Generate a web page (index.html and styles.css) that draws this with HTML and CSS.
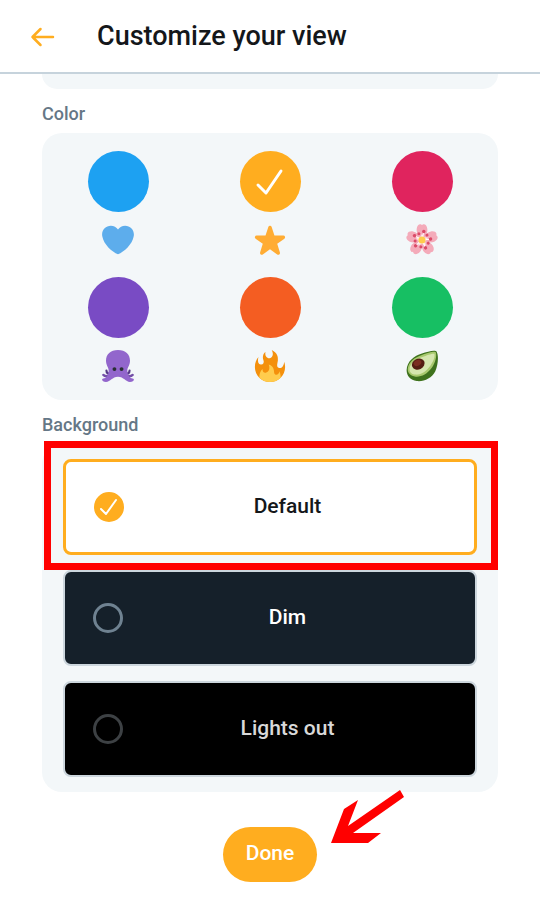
FILE: index.html
```html
<!DOCTYPE html>
<html lang="en">
<head>
<meta charset="utf-8">
<meta name="viewport" content="width=device-width, initial-scale=1">
<title>Customize your view</title>
<link rel="stylesheet" href="styles.css">
</head>
<body>
<header class="header">
  <button class="back" type="button" aria-label="Back">
    <svg viewBox="0 0 24 20" width="24" height="20"><path d="M22 11H1.500M9.500 3L1.500 11l8 8"/></svg>
  </button>
  <h1 class="title">Customize your view</h1>
</header>
<main class="content">
  <div class="panel panel-end"></div>

  <h2 class="section-title" id="color-title">Color</h2>
  <div class="panel colors" role="radiogroup" aria-labelledby="color-title">
    <label class="color">
      <input class="swatch blue" type="radio" name="color" aria-label="Blue">
      <svg class="emoji" viewBox="0 0 36 36"><path fill="#5DADEC" d="M35.885 11.833c0-5.450-4.418-9.868-9.867-9.868-3.308 0-6.227 1.633-8.018 4.129-1.791-2.496-4.710-4.129-8.017-4.129-5.450 0-9.868 4.417-9.868 9.868 0 .772.098 1.520.266 2.241C1.751 22.587 11.216 31.568 18 34.034c6.783-2.466 16.249-11.447 17.617-19.959.170-.721.268-1.469.268-2.242z"/></svg>
    </label>
    <label class="color">
      <input class="swatch yellow" type="radio" name="color" aria-label="Yellow" checked>
      <svg class="swatch-check" viewBox="0 0 61 61"><path d="M18 34l8 8 15-22"/></svg>
      <svg class="emoji" viewBox="0 0 36 36"><path fill="#FFAC33" d="M27.287 34.627c-.404 0-.806-.124-1.152-.371L18 28.422l-8.135 5.834a1.970 1.970 0 0 1-2.312-.008 1.971 1.971 0 0 1-.721-2.194l3.034-9.792-8.062-5.681a1.980 1.980 0 0 1-.708-2.203 1.978 1.978 0 0 1 1.866-1.363L12.947 13l3.179-9.549a1.976 1.976 0 0 1 3.749 0L23 13l10.036.015a1.975 1.975 0 0 1 1.159 3.566l-8.062 5.681 3.034 9.792a1.970 1.970 0 0 1-.720 2.194 1.957 1.957 0 0 1-1.160.379z"/></svg>
    </label>
    <label class="color">
      <input class="swatch pink" type="radio" name="color" aria-label="Pink">
      <svg class="emoji" viewBox="0 0 36 36">
        <defs>
          <g id="petal">
            <path fill="#F4ABBA" d="M18 18C14.500 14.500 11.500 10 12 5.500 12.300 2.500 14 .3 16 .3c1 0 1.300.7 2 .7s1-.7 2-.7c2 0 3.700 2.200 4 5.200.5 4.500-2.500 9-6 12.500z"/>
          </g>
          <g id="stamen">
            <path stroke="#fff" stroke-width="1.200" stroke-linecap="round" d="M18 18l2-9"/>
            <circle cx="20" cy="8.500" r="1.900" fill="#DB4B68"/>
            <circle cx="14.500" cy="11" r="1.700" fill="#DB4B68"/>
          </g>
        </defs>
        <use href="#petal"/><use href="#petal" transform="rotate(72 18 18)"/><use href="#petal" transform="rotate(144 18 18)"/><use href="#petal" transform="rotate(216 18 18)"/><use href="#petal" transform="rotate(288 18 18)"/>
        <path fill="#FCE7EB" d="M18 11l2 4 5 .5-3.500 4 .8 5L18 22l-4.300 2.500.8-5-3.500-4 5-.5z"/>
        <use href="#stamen"/><use href="#stamen" transform="rotate(72 18 18)"/><use href="#stamen" transform="rotate(144 18 18)"/><use href="#stamen" transform="rotate(216 18 18)"/><use href="#stamen" transform="rotate(288 18 18)"/>
        <circle cx="18" cy="18" r="4" fill="#FFCC4D"/>
      </svg>
    </label>
    <label class="color">
      <input class="swatch purple" type="radio" name="color" aria-label="Purple">
      <svg class="emoji" viewBox="0 0 36 36">
        <g fill="none" stroke="#553986" stroke-linecap="round" stroke-width="2.400"><path d="M5 23c0 3 2 4 5 4M31 23c0 3-2 4-5 4"/></g>
        <g fill="none" stroke="#7450A8" stroke-linecap="round" stroke-width="2.500"><path d="M1.500 28c2 2 5 1.500 8-1M34.500 28c-2 2-5 1.500-8-1"/></g>
        <path fill="#9266CC" d="M18 0C9.500 0 4.500 5 4.500 12c0 5 3 7.500 3 11 0 4-1 6-4 8.500-1 .8-3 .2-3.300 1.500-.4 1.500 1.300 3 4.300 3 5 0 7-5.800 13.500-5.800S26.500 36 31.500 36c3 0 4.700-1.500 4.300-3-.3-1.300-2.300-.7-3.300-1.500C29.500 29 28.500 27 28.500 23c0-3.500 3-6 3-11C31.500 5 26.500 0 18 0z"/>
        <circle cx="14" cy="21.500" r="2.200" fill="#292F33"/><circle cx="22" cy="21.500" r="2.200" fill="#292F33"/>
      </svg>
    </label>
    <label class="color">
      <input class="swatch orange" type="radio" name="color" aria-label="Orange">
      <svg class="emoji" viewBox="0 0 36 36"><path fill="#F4900C" d="M35 19c0-2.062-.367-4.039-1.040-5.868-.460 5.389-3.333 8.157-6.335 6.868-2.812-1.208-.917-5.917-.777-8.164.236-3.809-.012-8.169-6.931-11.794 2.875 5.500.333 8.917-2.333 9.125-2.958.231-5.667-2.542-4.667-7.042-3.238 2.386-3.332 6.402-2.333 9 1.042 2.708-.042 4.958-2.583 5.208-2.840.280-4.418-3.041-2.963-8.333C2.520 10.965 1 14.805 1 19c0 9.389 7.611 17 17 17s17-7.611 17-17z"/><path fill="#FFCC4D" d="M28.394 23.999c.148 3.084-2.561 4.293-4.019 3.709-2.106-.843-1.541-2.291-2.083-5.291s-2.625-5.083-5.708-6c2.250 6.333-1.247 8.667-3.080 9.084-1.872.426-3.753-.001-3.968-4.007C7.352 23.668 6 26.676 6 30c0 .368.023.730.055 1.090C9.125 34.124 13.342 36 18 36s8.875-1.876 11.945-4.910c.032-.360.055-.722.055-1.090 0-2.187-.584-4.236-1.606-6.001z"/></svg>
    </label>
    <label class="color">
      <input class="swatch green" type="radio" name="color" aria-label="Green">
      <svg class="emoji" viewBox="0 0 36 36">
        <path fill="#3E721D" d="M34.500 2C37 7 36 17 33 24 29 32 20 36 12 35 5 34 .5 29 .7 22.500 1 13 9 6.500 18 4c6-2 15-4.500 16.500-2z"/>
        <path fill="#A8C96E" d="M33.500 2.500c1.500 4-.5 12-4.500 17.500-5 7-12 10.500-18 10C5 29.500 1.800 26 2 21.500 2.300 13.500 10 8 18 5.500c6-2 14-4.500 15.500-3z"/>
        <path fill="#D5E6AE" d="M32 4.500c1 4-2 10-6 15-4.500 6-10 8.500-15 8.200-4.500-.3-7.200-2.700-7-6.700.3-6.500 7.500-11 14.500-13.200 5-1.600 12-4.300 13.500-3.300z"/>
        <ellipse cx="13.800" cy="15.800" rx="7.400" ry="6" transform="rotate(-25 13.800 15.800)" fill="#541D12"/>
        <ellipse cx="13" cy="14.500" rx="4.500" ry="3.200" transform="rotate(-25 13 14.500)" fill="#7A2C20"/>
      </svg>
    </label>
  </div>

  <h2 class="section-title" id="background-title">Background</h2>
  <div class="panel backgrounds" role="radiogroup" aria-labelledby="background-title">
    <div class="highlighted">
      <label class="option default">
        <input class="radio" type="radio" name="background" checked>
        <svg class="radio-check" viewBox="0 0 30 30"><path d="M7 17l5 5L22 8"/></svg>
        <span class="option-name">Default</span>
      </label>
      <div class="highlight"></div>
    </div>
    <label class="option dim">
      <input class="radio" type="radio" name="background">
      <span class="option-name">Dim</span>
    </label>
    <label class="option lights-out">
      <input class="radio" type="radio" name="background">
      <span class="option-name">Lights out</span>
    </label>
  </div>

  <div class="actions">
    <button class="done" type="button">Done</button>
    <svg class="pointer" viewBox="0 0 74 54" width="74" height="54"><path d="M0 53L13 19 27 10 17 36 69 0l4 7-51 36h28L37 53z"/></svg>
  </div>
</main>
</body>
</html>
```
FILE: styles.css
```css
* {
  box-sizing: border-box;
}

body {
  margin: 0;
  background: #fff;
  color: #14171a;
  font-family: Roboto, "Liberation Sans", sans-serif;
}

.header {
  display: flex;
  align-items: center;
  gap: 42px;
  height: 74px;
  padding: 0 31px;
  border-bottom: 2px solid #c6d3dc;
}

.back {
  display: flex;
  padding: 0;
  border: 0;
  background: none;
}

.back svg {
  overflow: visible;
  fill: none;
  stroke: #ffad1f;
  stroke-width: 2.500;
  stroke-linecap: round;
  stroke-linejoin: round;
}

.title {
  margin: 0;
  font-size: 27px;
  font-weight: 500;
  line-height: 32px;
}

.content {
  padding: 0 42px;
}

.panel {
  border-radius: 20px;
  background: #f3f7f9;
}

.panel-end {
  height: 15px;
  border-radius: 0 0 20px 20px;
}

.section-title {
  margin: 0;
  padding: 15px 0 9px;
  color: #657786;
  font-size: 18px;
  font-weight: 500;
  line-height: 20px;
}

.colors {
  display: grid;
  grid-template-columns: repeat(3, 1fr);
  row-gap: 21px;
  padding: 18px 0;
}

.color {
  position: relative;
  display: flex;
  flex-direction: column;
  align-items: center;
  gap: 12px;
}

.swatch {
  width: 61px;
  height: 61px;
  margin: 0;
  border-radius: 50%;
  appearance: none;
}

.swatch-check {
  position: absolute;
  top: 0;
  width: 61px;
  height: 61px;
  fill: none;
  stroke: #fff;
  stroke-width: 3;
  stroke-linecap: round;
  stroke-linejoin: round;
}

.blue { background: #1da1f2; }
.yellow { background: #ffad1f; }
.pink { background: #e0245e; }
.purple { background: #794bc4; }
.orange { background: #f45d22; }
.green { background: #17bf63; }

.emoji {
  width: 32px;
  height: 32px;
}

.backgrounds {
  display: flex;
  flex-direction: column;
  gap: 15px;
  padding: 15px 21px;
}

.highlighted {
  position: relative;
}

.highlight {
  position: absolute;
  inset: -18px -21px -15px -19px;
  border: 7px solid #f00;
  pointer-events: none;
}

.option {
  position: relative;
  display: flex;
  align-items: center;
  height: 96px;
  padding: 0 23px 0 28px;
  border: 2px solid #ccd6dd;
  border-radius: 8px;
  font-size: 21px;
  font-weight: 500;
  line-height: 24px;
}

.option-name {
  flex: 1;
  padding-bottom: 2px;
  text-align: center;
}

.radio {
  width: 30px;
  height: 30px;
  margin: 0;
  border: 3px solid #6f8291;
  border-radius: 50%;
  appearance: none;
}

.radio:checked {
  border-color: #ffad1f;
  background: #ffad1f;
}

.radio-check {
  position: absolute;
  left: 28px;
  width: 30px;
  height: 30px;
  fill: none;
  stroke: #fff;
  stroke-width: 2;
  stroke-linecap: round;
  stroke-linejoin: round;
}

.default {
  border: 3px solid #ffad1f;
  background: #fff;
}

.dim {
  background: #15202a;
  color: #fff;
}

.lights-out {
  background: #000;
  color: #d9d9d9;
}

.lights-out .radio {
  border-color: #3d4144;
}

.actions {
  position: relative;
  display: flex;
  justify-content: center;
  padding: 35px 0 42px;
}

.done {
  height: 55px;
  padding: 0 23px 4px;
  border: 0;
  border-radius: 28px;
  background: #ffad1f;
  color: #fff;
  font-family: inherit;
  font-size: 21px;
  font-weight: 500;
}

.pointer {
  position: absolute;
  top: -2px;
  left: calc(50% + 61px);
  fill: #f00;
}
```
